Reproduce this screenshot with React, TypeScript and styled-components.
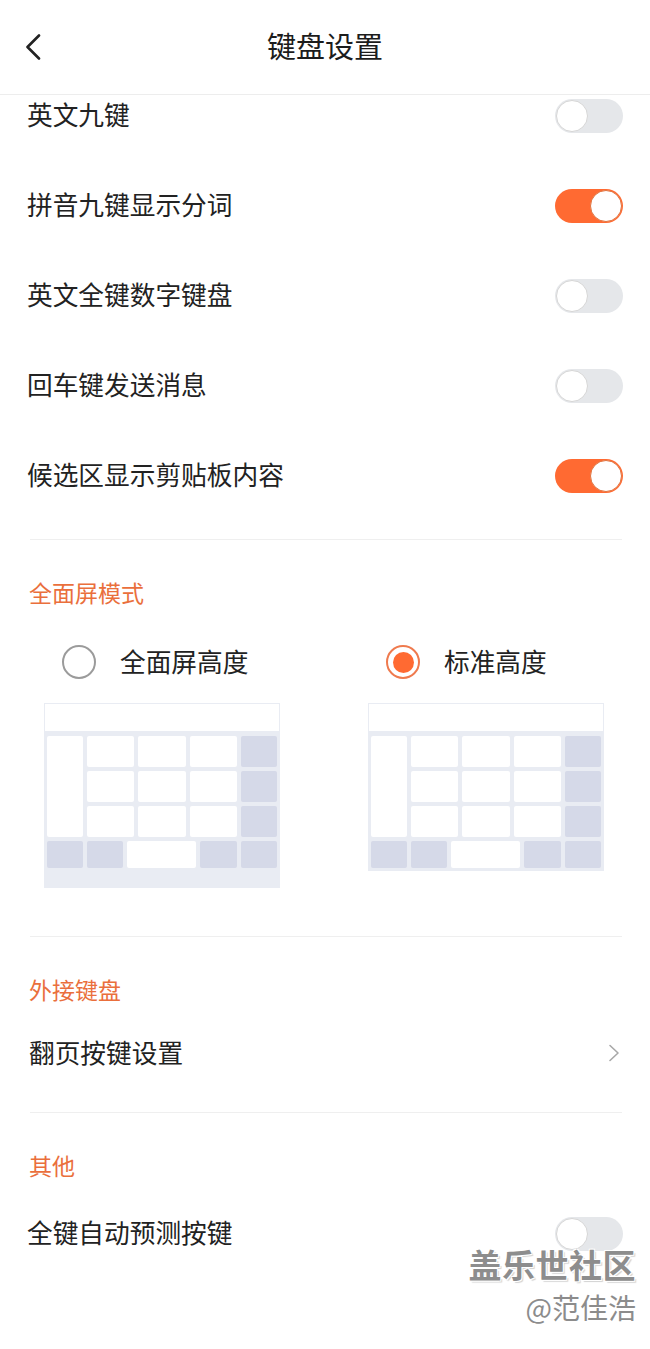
import React, { useState } from 'react';
import styled, { createGlobalStyle } from 'styled-components';

const GlobalStyle = createGlobalStyle`
  html, body { margin: 0; padding: 0; background: #fff; }
  body { font-family: "Noto Sans CJK SC", "Noto Sans", sans-serif; color: #222; }
  * { box-sizing: border-box; }
`;

const ORANGE = '#ff6a32';

const Page = styled.div`
  position: relative;
  width: 650px;
  height: 1349px;
  overflow: hidden;
  background: #fff;
  display: flex;
  flex-direction: column;
`;

const Header = styled.header`
  flex-shrink: 0;
  height: 95px;
  display: grid;
  grid-template-columns: 90px 1fr 90px;
  align-items: center;
  border-bottom: 1px solid #ededed;
`;

const BackButton = styled.button`
  border: 0;
  background: none;
  padding: 0 0 0 24px;
  height: 40px;
  display: flex;
  align-items: center;
  cursor: pointer;
`;

const Title = styled.h1`
  margin: 0;
  text-align: center;
  font-size: 29px;
  font-weight: 400;
  line-height: 40px;
  color: #1c1c1c;
  padding-bottom: 4px;
`;

const Body = styled.main`
  flex: 1;
  overflow: hidden;
`;

const Scroller = styled.div`
  margin-top: -24px;
`;

const Section = styled.section<{ $pb?: number; $divider?: boolean }>`
  position: relative;
  padding-bottom: ${p => p.$pb ?? 0}px;
  ${p => p.$divider ? `
    &::before {
      content: '';
      display: block;
      height: 1px;
      margin: 0 28px 0 30px;
      background: #efefef;
    }
  ` : ''}
`;

const SectionTitle = styled.h2`
  margin: 37px 0 0;
  padding: 0 0 3px 29px;
  height: 33px;
  line-height: 30px;
  font-size: 23px;
  font-weight: 400;
  color: #ea6f3c;
`;

const Row = styled.div<{ $mt?: number; $indent?: number }>`
  height: 90px;
  margin-top: ${p => p.$mt ?? 0}px;
  padding: 0 27px 0 ${p => 27 + (p.$indent ?? 0)}px;
  display: flex;
  align-items: center;
  justify-content: space-between;
`;

const RowLabel = styled.span`
  font-size: 25.7px;
  line-height: 36px;
  padding-bottom: 4px;
  color: #222;
`;

const Track = styled.button<{ $on: boolean }>`
  position: relative;
  width: 68px;
  height: 34px;
  border: 0;
  padding: 0;
  border-radius: 17px;
  background: ${p => (p.$on ? ORANGE : '#e5e7ea')};
  cursor: pointer;
`;

const Knob = styled.span<{ $on: boolean }>`
  position: absolute;
  top: 1px;
  left: ${p => (p.$on ? '35px' : '1px')};
  width: 32px;
  height: 32px;
  border-radius: 50%;
  background: #fff;
  border: 1.5px solid ${p => (p.$on ? '#e0743f' : '#d6d6d6')};
`;

const Toggle: React.FC<{ on: boolean; onChange: () => void }> = ({ on, onChange }) => (
  <Track $on={on} onClick={onChange} aria-pressed={on}>
    <Knob $on={on} />
  </Track>
);

const Options = styled.div`
  margin-top: 32px;
  padding-left: 44px;
  display: grid;
  grid-template-columns: 324px 1fr;
  align-items: start;
`;

const Option = styled.div`
  display: flex;
  flex-direction: column;
`;

const RadioRow = styled.label`
  height: 40px;
  padding-left: 18px;
  display: flex;
  align-items: center;
  gap: 24px;
  cursor: pointer;
`;

const RadioCircle = styled.span<{ $checked: boolean }>`
  width: 34px;
  height: 34px;
  border-radius: 50%;
  border: 2px solid ${p => (p.$checked ? '#ef7a4e' : '#9b9b9b')};
  display: flex;
  align-items: center;
  justify-content: center;
  &::after {
    content: '';
    display: ${p => (p.$checked ? 'block' : 'none')};
    width: 21px;
    height: 21px;
    border-radius: 50%;
    background: ${ORANGE};
  }
`;

const RadioLabel = styled.span`
  font-size: 25.7px;
  line-height: 36px;
  padding-bottom: 2px;
  color: #222;
`;

const Diagram = styled.div<{ $extra: boolean }>`
  margin-top: 21px;
  width: 236px;
  background: #e9ecf3;
  padding-bottom: ${p => (p.$extra ? 20 : 3)}px;
`;

const CandidateBar = styled.div`
  height: 28px;
  background: #fff;
  border: 1px solid #e9ecf3;
  border-bottom: 0;
`;

const KeyGrid = styled.div`
  padding: 5px 3px 0;
  display: grid;
  grid-template-columns: 36px 1fr 1fr 1fr 36px;
  grid-template-rows: 31px 31px 31px;
  gap: 4px;
`;

const Key = styled.div<{ $dark?: boolean; $tall?: boolean; $w?: number }>`
  border-radius: 2px;
  background: ${p => (p.$dark ? '#d5d9e8' : '#fff')};
  ${p => (p.$tall ? 'grid-row: 1 / span 3;' : '')}
  ${p => (p.$w ? `width: ${p.$w}px; flex-shrink: 0;` : 'flex: 1;')}
`;

const BottomKeys = styled.div`
  margin-top: 4px;
  padding: 0 3px;
  height: 27px;
  display: flex;
  gap: 4px;
`;

const KeyboardDiagram: React.FC<{ extra: boolean }> = ({ extra }) => (
  <Diagram $extra={extra}>
    <CandidateBar />
    <KeyGrid>
      <Key $tall />
      <Key />
      <Key />
      <Key />
      <Key $dark />
      <Key />
      <Key />
      <Key />
      <Key $dark />
      <Key />
      <Key />
      <Key />
      <Key $dark />
    </KeyGrid>
    <BottomKeys>
      <Key $dark $w={36} />
      <Key $dark $w={36} />
      <Key />
      <Key $dark $w={37} />
      <Key $dark $w={36} />
    </BottomKeys>
  </Diagram>
);

const Chevron = styled.svg`
  width: 12px;
  height: 18px;
  margin-right: 3px;
  margin-bottom: 3px;
`;

const Watermark = styled.div`
  position: absolute;
  right: 14px;
  top: 1243px;
  display: flex;
  flex-direction: column;
  align-items: flex-end;
  pointer-events: none;
`;

const WatermarkBrand = styled.span`
  font-size: 33px;
  font-weight: 700;
  line-height: 42px;
  color: #8d8d8d;
  text-shadow: 1px 1px 0 #fff, -1px -1px 0 #fff, 1px -1px 0 #fff, -1px 1px 0 #fff, 2px 2px 1px rgba(0,0,0,0.18);
  letter-spacing: 0.5px;
`;

const WatermarkAuthor = styled.span`
  margin-top: 2px;
  font-size: 28px;
  line-height: 40px;
  color: #8c8c8c;
  text-shadow: 1px 1px 0 #fff, -1px -1px 0 #fff;
`;

const toggleItems = [
  { key: 'en9', label: '英文九键', on: false },
  { key: 'py9', label: '拼音九键显示分词', on: true },
  { key: 'enNum', label: '英文全键数字键盘', on: false },
  { key: 'enter', label: '回车键发送消息', on: false },
  { key: 'clip', label: '候选区显示剪贴板内容', on: true },
];

export default function App() {
  const [toggles, setToggles] = useState<Record<string, boolean>>(() => {
    const o: Record<string, boolean> = {};
    toggleItems.forEach(t => (o[t.key] = t.on));
    o.predict = false;
    return o;
  });
  const [mode, setMode] = useState<'full' | 'std'>('std');
  const flip = (k: string) => setToggles(s => ({ ...s, [k]: !s[k] }));

  return (
    <>
      <GlobalStyle />
      <Page>
        <Header>
          <BackButton aria-label="返回">
            <svg width="18" height="26" viewBox="0 0 18 26">
              <polyline points="15,1.5 3.5,13 15,24.5" fill="none" stroke="#222" strokeWidth="2.6" strokeLinecap="round" strokeLinejoin="round" />
            </svg>
          </BackButton>
          <Title>键盘设置</Title>
          <span />
        </Header>
        <Body>
          <Scroller>
            <Section $pb={18}>
              {toggleItems.map(t => (
                <Row key={t.key}>
                  <RowLabel>{t.label}</RowLabel>
                  <Toggle on={toggles[t.key]} onChange={() => flip(t.key)} />
                </Row>
              ))}
            </Section>
            <Section $divider $pb={48}>
              <SectionTitle>全面屏模式</SectionTitle>
              <Options>
                <Option>
                  <RadioRow onClick={() => setMode('full')}>
                    <RadioCircle $checked={mode === 'full'} />
                    <RadioLabel>全面屏高度</RadioLabel>
                  </RadioRow>
                  <KeyboardDiagram extra />
                </Option>
                <Option>
                  <RadioRow onClick={() => setMode('std')}>
                    <RadioCircle $checked={mode === 'std'} />
                    <RadioLabel>标准高度</RadioLabel>
                  </RadioRow>
                  <KeyboardDiagram extra={false} />
                </Option>
              </Options>
            </Section>
            <Section $divider $pb={13}>
              <SectionTitle>外接键盘</SectionTitle>
              <Row $mt={2} $indent={2}>
                <RowLabel>翻页按键设置</RowLabel>
                <Chevron viewBox="0 0 12 18">
                  <polyline points="2,1.5 10,9 2,16.5" fill="none" stroke="#a8a8a8" strokeWidth="1.6" strokeLinecap="round" strokeLinejoin="round" />
                </Chevron>
              </Row>
            </Section>
            <Section $divider>
              <SectionTitle>其他</SectionTitle>
              <Row $mt={6}>
                <RowLabel>全键自动预测按键</RowLabel>
                <Toggle on={toggles.predict} onChange={() => flip('predict')} />
              </Row>
            </Section>
          </Scroller>
        </Body>
        <Watermark>
          <WatermarkBrand>盖乐世社区</WatermarkBrand>
          <WatermarkAuthor>@范佳浩</WatermarkAuthor>
        </Watermark>
      </Page>
    </>
  );
}
